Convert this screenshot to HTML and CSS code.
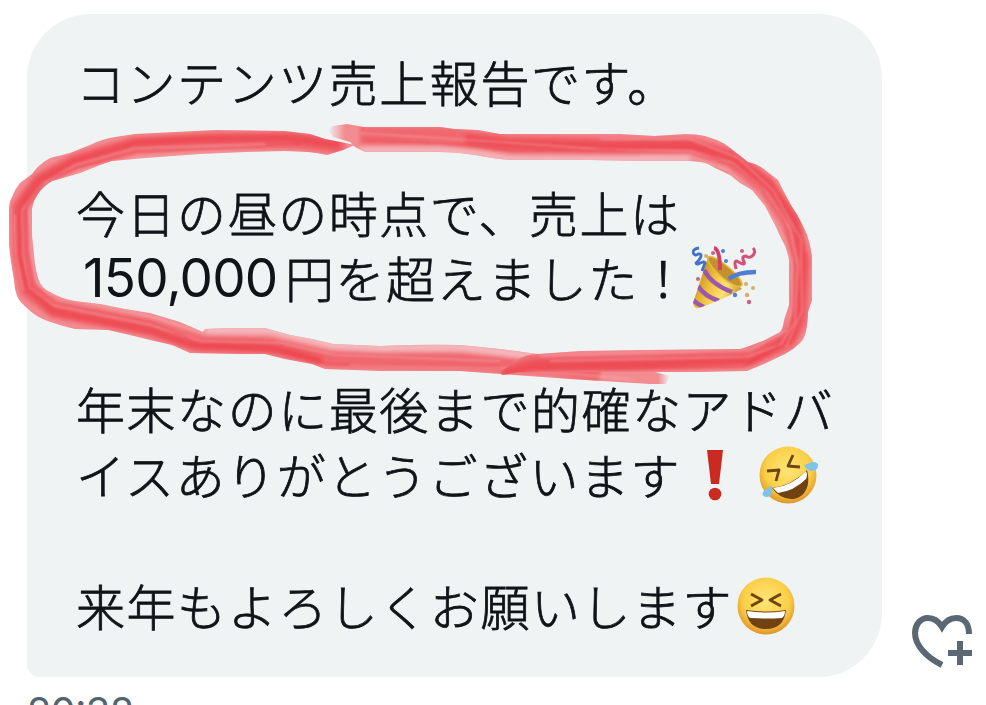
FILE: index.html
```html
<!DOCTYPE html>
<html lang="ja">
<head>
<meta charset="UTF-8">
<title>メッセージ</title>
<link rel="stylesheet" href="styles.css">
</head>
<body>

<div class="row">
  <div class="bubble">
    <p>コンテンツ売上報告です。</p>
    <p class="blank"></p>
    <p>今日の昼の時点で、売上は</p>
    <p><span class="number">150,000</span>円を超えました！<svg class="emoji party" viewBox="0 0 66 66">
        <defs>
          <linearGradient id="cone" x1="0" y1="0.3" x2="1" y2="0.8">
            <stop offset="0" stop-color="#b98217"/><stop offset=".4" stop-color="#f2c440"/><stop offset=".65" stop-color="#ffe271"/><stop offset="1" stop-color="#b98420"/>
          </linearGradient>
          <clipPath id="coneClip"><path d="M16 12 50 44Q30 55 7 63Q2 64 1 58Z"/></clipPath>
        </defs>
        <path d="M16 12 50 44Q30 55 7 63Q2 64 1 58Z" fill="url(#cone)"/>
        <g clip-path="url(#coneClip)" fill="none" stroke="#9b58ad" stroke-width="4.5">
          <path d="M12 25Q20 40 40 47M6 41Q12 51 27 56M0 54Q5 59 12 62"/>
        </g>
        <path d="M16 12C22 8 51 32 50 40C47 44 40 40 32 34C24 27 14 18 16 12Z" fill="#c3912e" stroke="#e8b93f" stroke-width="1.6"/>
        <path d="M22 3Q28 4 28 25" fill="none" stroke="#d43f68" stroke-width="4"/>
        <path d="M37 34Q45 27 64 27" fill="none" stroke="#4d7fd5" stroke-width="4.5"/>
        <path d="M7 3C-3 4 2 13 6 9C12 8 8 15 4 18C5 22 12 14 13 18L10 26" fill="none" stroke="#426fc8" stroke-width="2.8"/>
        <path d="M61 3C66 8 58 15 54 11C47 11 54 18 52 19C48 20 43 12 43 19L44 24" fill="none" stroke="#d2507a" stroke-width="3"/>
        <g fill="#cc6088"><circle cx="21" cy="8" r="2"/><circle cx="50" cy="6" r="2"/><circle cx="6" cy="34" r="2"/><circle cx="57" cy="57" r="2.2"/></g>
        <g fill="#4e82cf"><circle cx="31" cy="6" r="2"/><circle cx="34" cy="16" r="2"/><circle cx="43" cy="50" r="2.2"/></g>
        <g fill="#dfac60"><circle cx="14" cy="11" r="2"/><circle cx="54" cy="39" r="2"/><circle cx="61" cy="43" r="2"/><circle cx="55" cy="50" r="2.2"/></g>
      </svg></p>
    <p class="blank"></p>
    <p>年末なのに最後まで的確なアドバ</p>
    <p>イスありがとうございます<svg class="emoji bang" viewBox="0 0 20 54">
        <path d="M2 2H18L14 36H6Z" fill="#cb2a20"/>
        <circle cx="10" cy="46" r="6.3" fill="#cb2a20"/>
      </svg><svg class="emoji rofl" viewBox="0 0 62 60">
        <defs>
          <radialGradient id="face" cx=".5" cy=".4" r=".62">
            <stop offset="0" stop-color="#ffe577"/><stop offset=".65" stop-color="#fbcf48"/><stop offset="1" stop-color="#dc8f25"/>
          </radialGradient>
        </defs>
        <circle cx="30" cy="30" r="28.5" fill="url(#face)"/>
        <path d="M14 43Q33 41 49 25C54 44 44 53 35 54Q23 55 14 43Z" fill="#704213"/>
        <path d="M15 43Q34 41 48 26Q50 30 48 34Q36 46 20 48Z" fill="#fff"/>
        <path d="M9 26 21 25 18 36M35 10 30 21 42 22" fill="none" stroke="#6f4611" stroke-width="2.8" stroke-linejoin="round"/>
        <path d="M46 21Q56 14 60 19Q61 26 53 26Q49 25 46 21Z" fill="#7dc4e8"/>
        <path d="M14 40Q15 53 8 52Q2 50 6 46Z" fill="#7dc4e8"/>
      </svg></p>
    <p class="blank"></p>
    <p>来年もよろしくお願いします<svg class="emoji laugh" viewBox="0 0 60 60">
        <circle cx="30" cy="30" r="28.5" fill="url(#face)"/>
        <path d="M15 18 26 24 15 30M45 18 34 24 45 30" fill="none" stroke="#70450d" stroke-width="2.8" stroke-linejoin="round"/>
        <path d="M10 34Q30 37 50 34Q48 53 30 53Q12 53 10 34Z" fill="#704213"/>
        <path d="M11 35Q30 38 49 35Q49 40 46 42Q30 43 14 42Q11 40 11 35Z" fill="#fff"/>
      </svg></p>
  </div>

  <svg class="react" viewBox="0 0 62 56">
    <path d="M57 20C57 10 52 4 44 4C37 4 33 8 30 13C27 8 23 4 16 4C8 4 3 11 3 19C3 31 14 43 30 51" fill="none" stroke="#5b6873" stroke-width="6"/>
    <path d="M48 27V51M36 39H60" stroke="#5b6873" stroke-width="6"/>
  </svg>
</div>

<div class="time">20<span class="colon">:</span>38</div>

<!-- marker drawn over the message -->
<svg class="marker" viewBox="0 0 986 705">
  <defs>
    <linearGradient id="tail" gradientUnits="userSpaceOnUse" x1="640" y1="0" x2="670" y2="0">
      <stop offset="0" stop-color="#f28c91"/><stop offset=".6" stop-color="#f28c91"/><stop offset="1" stop-color="#f28c91" stop-opacity="0"/>
    </linearGradient>
    <linearGradient id="head" gradientUnits="userSpaceOnUse" x1="328" y1="0" x2="345" y2="0">
      <stop offset="0" stop-color="#f28c91" stop-opacity="0"/><stop offset="1" stop-color="#f28c91"/>
    </linearGradient>
    <filter id="smear" filterUnits="userSpaceOnUse" x="0" y="110" width="830" height="290"><feGaussianBlur stdDeviation="2.2"/></filter>
    <filter id="bristle" filterUnits="userSpaceOnUse" x="0" y="110" width="830" height="290"><feGaussianBlur stdDeviation="0.8"/></filter>
    <path id="left" d="M355 145L343 150L327 155Q318 153 308 152L285 151L245 152L200 154L145 158L112 161Q102 164 95 167L80 173L52 181Q42 187 38 194Q33 201 32 209L32 235L34 255Q35 268 38 278Q41 288 50 292Q62 299 75 301L100 304L125 309L150 313L180 322L203 332L205 329L230 328L265 328L290 335L312 339L333 344L380 346Q425 344 460 345L500 349L545 355L565 370L655 372L670 376L666 384L650 384L570 379L500 374L460 371L380 371L325 369L312 364L285 359L265 354L240 354L190 353L172 345L150 340L130 335L108 330L75 329Q58 325 45 320Q35 316 27 308Q19 301 17 296Q14 288 14 280L11 262L9 245L9 210Q9 202 12 197Q15 189 20 183L32 174Q38 165 50 158L70 153L90 145Q102 139 115 137L135 134L175 132L215 130L285 131L310 134L325 139Z"/>
    <path id="right" d="M328 130L333 126L347 124L364 127L440 127L455 129L478 130L500 134L620 134L655 136L685 134Q697 134 705 136Q716 139 725 144L748 162Q758 164 765 170L778 180L783 190Q787 198 791 205Q798 215 803 226Q808 235 810 245L812 256L812 300L808 312Q808 318 807 325Q806 337 800 343Q793 350 785 354L764 364L747 371L700 372L540 372L520 372L502 375L500 372L516 361Q525 354 538 354L580 351L640 350L740 349Q747 347 752 345L765 340L780 332Q783 329 784 320L789 305L789 260Q787 248 782 240L775 225L765 206L752 190L740 183L730 175L715 168Q706 162 700 162L690 161L640 161L590 160L510 160Q495 159 475 155Q457 152 440 152L365 152L355 147L350 142L333 137Z"/>
    <clipPath id="leftClip"><use href="#left"/></clipPath>
    <clipPath id="rightClip"><use href="#right"/></clipPath>
  </defs>
  <use href="#left" fill="url(#tail)"/>
  <g clip-path="url(#leftClip)" fill="none" stroke-linejoin="round">
    <g filter="url(#smear)">
      <path class="soft" d="M345 146L290 140L215 141L135 145L75 162L40 181L20 207L21 255L28 290L55 310L110 320L150 328L200 344L270 346L330 359L450 361L550 366L600 375" stroke-width="17"/>
      <path class="deep" d="M340 145L285 138L200 139L135 143L75 161L38 181L20 207L20 257L28 288L53 311L108 322L150 330L192 345L270 347L322 361" stroke-width="9"/>
      <path class="pale" d="M205 330L270 330L333 345L380 348L460 347L540 357" stroke-width="8"/>
    </g>
    <g filter="url(#bristle)">
      <path class="light" d="M300 152L200 153L140 157L80 171L48 184L30 208L31 250L36 281L48 293L102 306L150 316L203 333"/>
      <path class="light" d="M265 144L135 148L75 165L42 184L22 210L23 255L30 288L55 306L110 317L150 325L200 341L280 343L335 355L500 361M15 215L16 255L23 290M350 365L500 368L630 379"/>
      <path class="dark" d="M300 144L135 152L77 167L45 180L26 204L27 249L35 286L55 303L105 313L150 322L205 345L285 352L330 364L500 367"/>
    </g>
  </g>
  <use href="#right" fill="url(#head)"/>
  <g clip-path="url(#rightClip)" fill="none" stroke-linejoin="round">
    <g filter="url(#smear)">
      <path class="soft" d="M360 136L440 136L505 144L610 146L690 146L730 157L765 184L791 222L801 260L799 320L787 341L747 358L640 362L530 364L500 374" stroke-width="18"/>
      <path class="deep" d="M465 139L510 144L620 146L690 145L730 157L769 184L795 221L803 260L799 312L791 338L752 360L640 364L535 365L502 374" stroke-width="10"/>
      <path class="pale" d="M360 150L440 150L475 153L510 159L600 159L690 159" stroke-width="6"/>
    </g>
    <g filter="url(#bristle)">
      <path class="light" d="M360 133L470 140L600 149L690 151L733 163L766 192L790 228L798 265L795 322L781 344L747 357L550 361M600 139L690 139L738 158L773 190L801 240L802 311L786 347"/>
      <path class="light" d="M640 156L690 156L728 170L760 197L785 240L792 266L792 305L787 330L750 350L540 356"/>
      <path class="dark" d="M365 140L465 145L515 151L690 148L735 166L762 188L784 220L795 259L793 322L777 346L743 367L530 369M363 127L362 132"/>
    </g>
  </g>
</svg>

</body>
</html>
```
FILE: styles.css
```css
body {
  margin: 0;
  height: 705px;
  overflow: hidden;
  background: #fff;
  color: #0f1419;
  font-family: "Noto Sans CJK JP", sans-serif;
}

.row {
  display: flex;
  align-items: flex-end;
  padding: 14px 0 0 27px;
}

.bubble {
  box-sizing: border-box;
  width: 855px;
  height: 663px;
  padding: 35px 0 0 49px;
  background: #eff3f4;
  border-radius: 64px 64px 64px 13px;
}

.bubble p {
  display: flex;
  align-items: center;
  margin: 0;
  height: 65.5px;
  font-size: 49px;
  font-weight: 300;
  line-height: 62px;
  letter-spacing: 1.55px;
  white-space: nowrap;
  -webkit-text-stroke: 0.8px #0f1419; /* a little heavier than light */
}

.bubble p::before {
  content: "";
  height: 65.5px;
}

.number {
  box-sizing: border-box;
  width: 209px;
  padding: 2px 0 0 7px;
  font-family: Inter, sans-serif;
  font-size: 53px;
  font-weight: 400;
  letter-spacing: -0.8px;
  -webkit-text-stroke: 0;
}

.emoji {
  flex: none;
}

.party {
  width: 66px;
  height: 66px;
  margin-left: 3px;
}

.bang {
  width: 20px;
  height: 54px;
  margin-left: 24px;
}

.rofl {
  width: 62px;
  height: 60px;
  margin-left: 33px;
}

.laugh {
  width: 60px;
  height: 60px;
  margin-left: 3px;
}

.bubble {
  padding-top: 34px;
}

.emoji {
  margin-top: 2px;
}

.react {
  width: 62px;
  height: 56px;
  margin: 0 0 7px 30px;
}

.time {
  margin: 10px 0 0 27px;
  color: #536471;
  font-family: Inter, sans-serif;
  font-size: 40px;
  line-height: 50px;
  letter-spacing: -0.8px;
}

.colon {
  position: relative;
  top: -4px;
}

.marker {
  position: absolute;
  top: 0;
  left: 0;
  width: 986px;
  height: 705px;
  pointer-events: none;
}

.soft {
  stroke: #ef5f67;
  opacity: 0.8;
}

.deep {
  stroke: #ee434c;
  opacity: 0.7;
}

.pale {
  stroke: #f5c3c7;
  opacity: 0.8;
}

.light {
  stroke: #f8bcc0;
  stroke-width: 1.5px;
  opacity: 0.45;
}

.dark {
  stroke: #ea3842;
  stroke-width: 1.5px;
  opacity: 0.4;
}
```
